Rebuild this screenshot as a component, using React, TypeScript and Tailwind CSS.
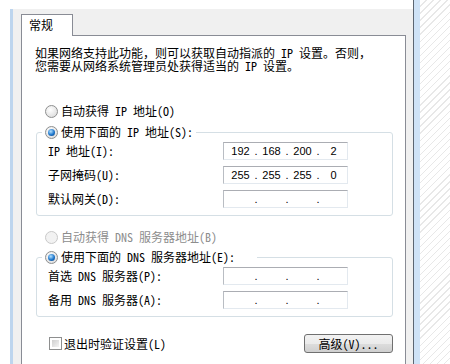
import React from 'react';

const Radio: React.FC<{ checked?: boolean; disabled?: boolean }> = ({ checked, disabled }) => (
  <span
    className={
      disabled
        ? 'flex items-center justify-center shrink-0 w-[13px] h-[13px] rounded-full border border-[#c9c9c9] bg-[#f2f2f2]'
        : 'flex items-center justify-center shrink-0 w-[13px] h-[13px] rounded-full border border-[#8e8f8f] bg-[radial-gradient(circle_at_40%_35%,#ffffff,#d6d6d6)]'
    }
  >
    {checked && (
      <span className="w-[7px] h-[7px] rounded-full bg-[radial-gradient(circle_at_40%_35%,#b5e2ff,#1d76cc_55%,#0b3a72)]" />
    )}
  </span>
);

const IpBox: React.FC<{ parts?: string[] }> = ({ parts = ['', '', '', ''] }) => (
  <div className="flex items-center w-[125px] h-[18px] pl-[4px] bg-white border border-[#e3e9ef] border-t-[#abadb3] border-l-[#b9bdc3] font-['Liberation_Sans',sans-serif] text-[11px] leading-none">
    <span className="w-[25px] text-center">{parts[0]}</span>
    <span className="w-[6px] text-center">.</span>
    <span className="w-[25px] text-center">{parts[1]}</span>
    <span className="w-[6px] text-center">.</span>
    <span className="w-[25px] text-center">{parts[2]}</span>
    <span className="w-[6px] text-center">.</span>
    <span className="w-[25px] text-center">{parts[3]}</span>
  </div>
);

const Row: React.FC<{ label: string; parts?: string[] }> = ({ label, parts }) => (
  <div className="flex items-center h-[18px]">
    <span className="w-[186px] pl-[11px] leading-[16px]">{label}</span>
    <IpBox parts={parts} />
  </div>
);

export default function App() {
  return (
    <div className="w-[450px] h-[364px] overflow-hidden flex bg-white text-[12px] text-black font-['Noto_Sans_Mono_CJK_SC','Noto_Sans_CJK_SC',sans-serif]">
      {/* left window edge */}
      <div className="w-[10px] shrink-0" />
      <div className="w-[3px] shrink-0 mt-[9px] bg-[#bdd5ee]" />

      {/* dialog body */}
      <div className="w-[400px] shrink-0 flex flex-col min-h-0">
        <div className="h-[9px] shrink-0 bg-white" />
        <div className="flex-1 min-h-0 overflow-hidden bg-[#f0f0f0] pl-[8px] pt-[5px]">
          <div className="relative z-10 -mb-px w-[52px] h-[22px] pl-[7px] pt-[2px] bg-white border border-b-0 border-[#898c95] leading-[16px]">
            常规
          </div>
          <div className="w-[385px] h-[340px] bg-white border border-[#898c95]">
            <p className="pl-[13px] pt-[10px] leading-[13px]">
              如果网络支持此功能，则可以获取自动指派的 IP 设置。否则，
              <br />
              您需要从网络系统管理员处获得适当的 IP 设置。
            </p>

            <div className="flex items-center gap-[3px] ml-[23px] mt-[31px] h-[16px] leading-[16px]">
              <Radio />
              <span>自动获得 IP 地址(O)</span>
            </div>

            <fieldset className="ml-[14px] mt-[5px] w-[357px] border border-[#d5dfe5] rounded-[3px] pb-[7px]">
              <legend className="ml-[5px] pl-[3px] pr-[3px]">
                <div className="flex items-center gap-[3px] h-[16px] leading-[16px]">
                  <Radio checked />
                  <span>使用下面的 IP 地址(S):</span>
                </div>
              </legend>
              <div className="flex flex-col gap-[6px] pt-[2px]">
                <Row label="IP 地址(I):" parts={['192', '168', '200', '2']} />
                <Row label="子网掩码(U):" parts={['255', '255', '255', '0']} />
                <Row label="默认网关(D):" />
              </div>
            </fieldset>

            <div className="flex items-center gap-[3px] ml-[23px] mt-[13px] h-[16px] leading-[16px] text-[#8d8d8d]">
              <Radio disabled />
              <span>自动获得 DNS 服务器地址(B)</span>
            </div>

            <fieldset className="ml-[14px] mt-[4px] w-[357px] border border-[#d5dfe5] rounded-[3px] pb-[7px]">
              <legend className="ml-[5px] pl-[3px] pr-[22px]">
                <div className="flex items-center gap-[3px] h-[16px] leading-[16px]">
                  <Radio checked />
                  <span>使用下面的 DNS 服务器地址(E):</span>
                </div>
              </legend>
              <div className="flex flex-col gap-[6px] pt-[2px]">
                <Row label="首选 DNS 服务器(P):" />
                <Row label="备用 DNS 服务器(A):" />
              </div>
            </fieldset>

            <div className="ml-[14px] mt-[17px] w-[357px] flex items-center justify-between">
              <div className="flex items-center gap-[2px] ml-[13px] leading-[16px]">
                <span className="w-[13px] h-[13px] p-[2px] border border-[#8e8f8f] bg-white">
                  <span className="block w-full h-full bg-[linear-gradient(135deg,#cfcfcf,#f4f4f4)]" />
                </span>
                <span>退出时验证设置(L)</span>
              </div>
              <button className="w-[89px] h-[19px] rounded-[3px] border border-[#707070] bg-[linear-gradient(#f2f2f2_0%,#ebebeb_50%,#dddddd_51%,#cfcfcf_100%)] leading-[16px] text-center">
                高级(V)...
              </button>
            </div>
          </div>
        </div>
      </div>

      {/* right window edge */}
      <div className="w-[1px] shrink-0 bg-[#5c6672]" />
      <div className="w-[6px] shrink-0 bg-[#cfe3f7]" />
      <div className="w-[30px] shrink-0 bg-[repeating-linear-gradient(135deg,#ffffff_0px,#ffffff_4px,#e8e8e8_4px,#e8e8e8_5px)]" />
    </div>
  );
}
